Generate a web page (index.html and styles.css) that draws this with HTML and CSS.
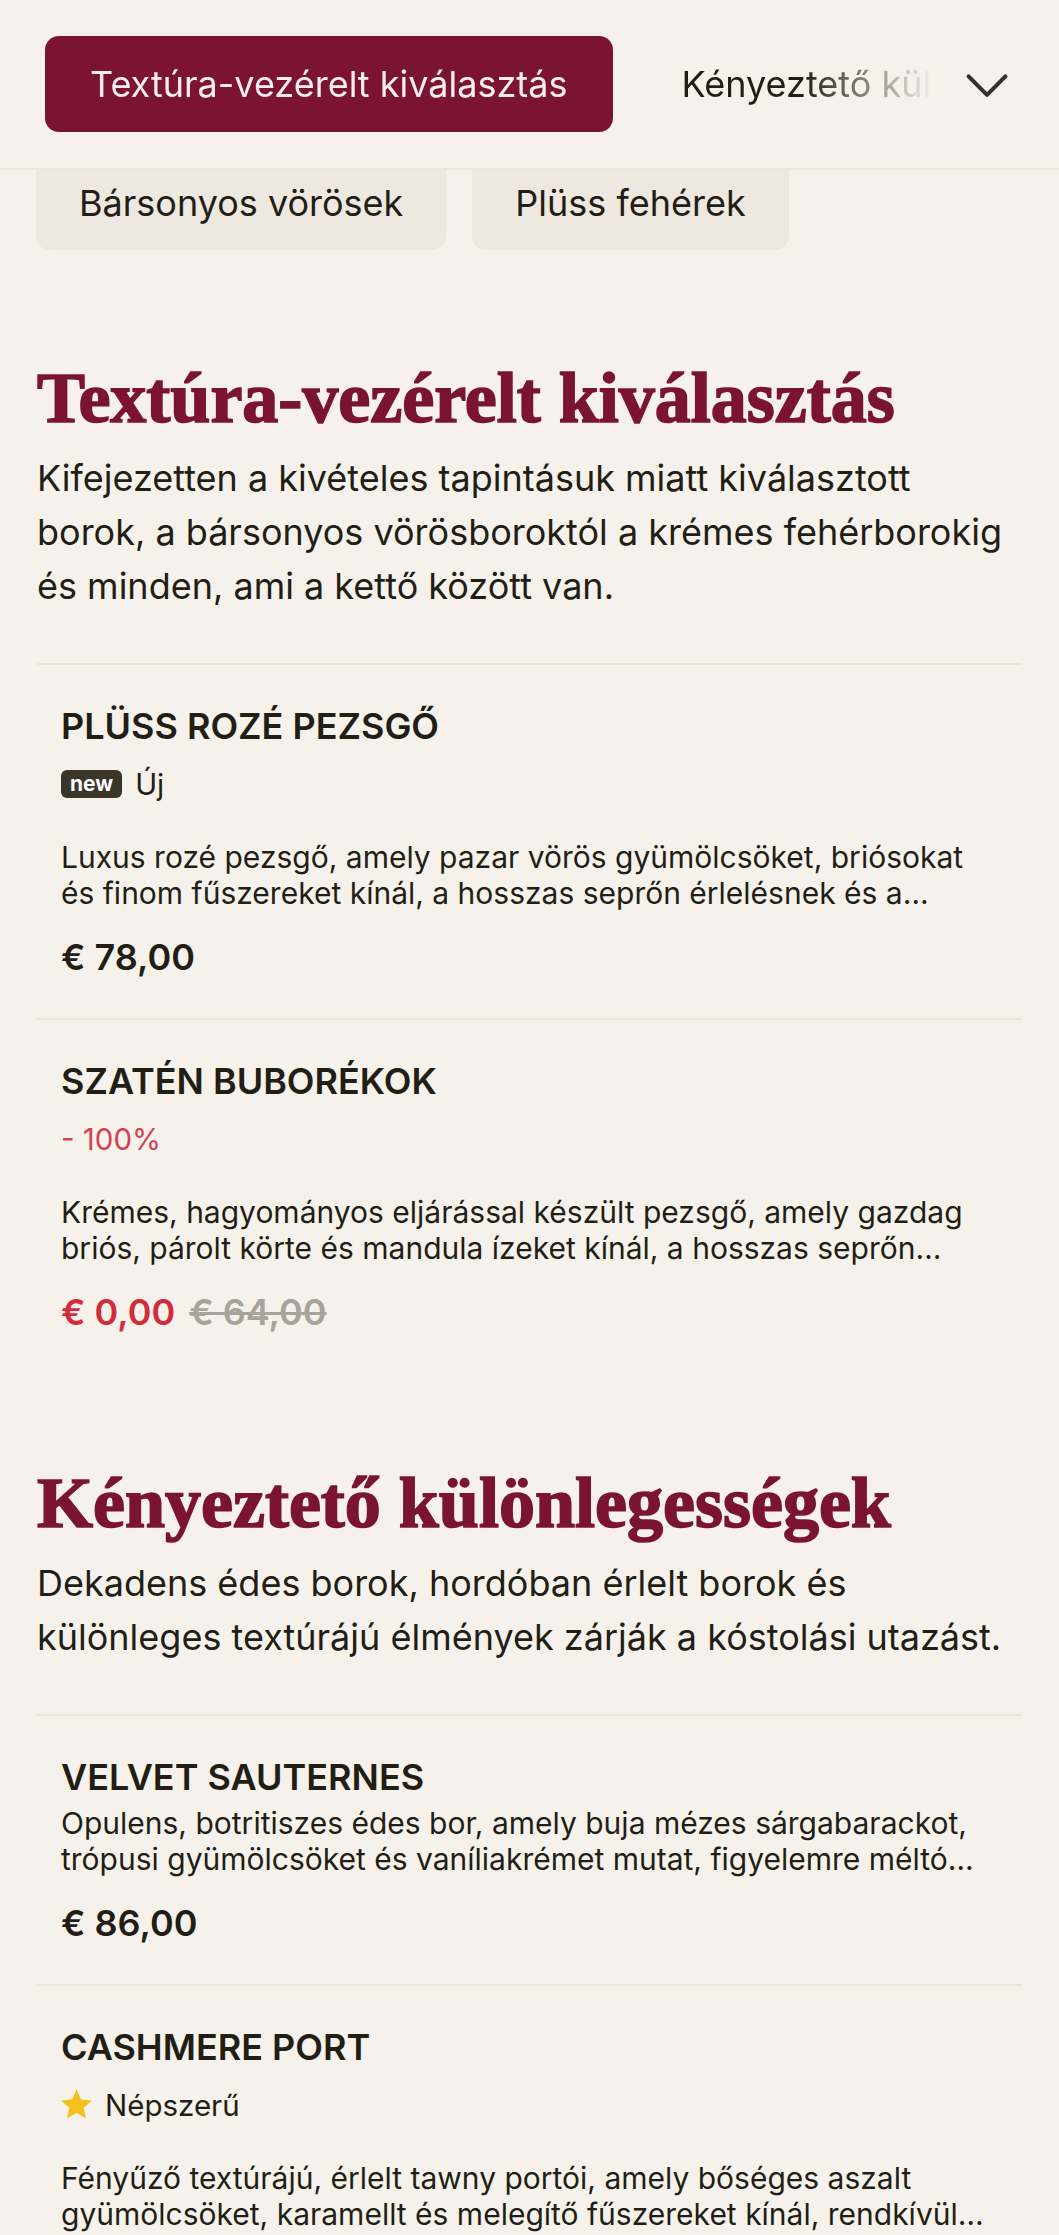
FILE: index.html
```html
<!DOCTYPE html>
<html lang="hu">
<head>
<meta charset="utf-8">
<title>Borlap</title>
<link rel="stylesheet" href="styles.css">
</head>
<body>
<header class="topbar">
  <nav class="tabs">
    <a class="tab tab-active">Textúra-vezérelt kiválasztás</a>
    <a class="tab">Kényeztető különlegességek</a>
  </nav>
  <button class="tabs-toggle" aria-label="Kategóriák">
    <svg width="52" height="52" viewBox="0 0 24 24" fill="none" stroke="#35302a" stroke-width="1.9" stroke-linecap="round" stroke-linejoin="round"><polyline points="3.5 8.5 12 17 20.5 8.5"/></svg>
  </button>
</header>
<div class="chips-viewport">
  <div class="chips">
    <span class="chip">Bársonyos vörösek</span>
    <span class="chip">Plüss fehérek</span>
  </div>
</div>
<main>
  <section class="menu-section">
    <h2 class="section-title">Textúra-vezérelt kiválasztás</h2>
    <p class="section-desc">Kifejezetten a kivételes tapintásuk miatt kiválasztott borok, a bársonyos vörösboroktól a krémes fehérborokig és minden, ami a kettő között van.</p>
    <ul class="products">
      <li class="product">
        <h3 class="product-name">PLÜSS ROZÉ PEZSGŐ</h3>
        <div class="product-tags"><span class="badge-new">new</span><span>Új</span></div>
        <p class="product-desc">Luxus rozé pezsgő, amely pazar vörös gyümölcsöket, briósokat és finom fűszereket kínál, a hosszas seprőn érlelésnek és a…</p>
        <div class="product-price"><span>€ 78,00</span></div>
      </li>
      <li class="product">
        <h3 class="product-name">SZATÉN BUBORÉKOK</h3>
        <div class="product-tags"><span class="discount">- 100%</span></div>
        <p class="product-desc">Krémes, hagyományos eljárással készült pezsgő, amely gazdag briós, párolt körte és mandula ízeket kínál, a hosszas seprőn…</p>
        <div class="product-price"><span class="price-sale">€ 0,00</span><span class="price-old">€ 64,00</span></div>
      </li>
    </ul>
  </section>
  <section class="menu-section">
    <h2 class="section-title">Kényeztető különlegességek</h2>
    <p class="section-desc">Dekadens édes borok, hordóban érlelt borok és különleges textúrájú élmények zárják a kóstolási utazást.</p>
    <ul class="products">
      <li class="product">
        <h3 class="product-name">VELVET SAUTERNES</h3>
        <p class="product-desc">Opulens, botritiszes édes bor, amely buja mézes sárgabarackot, trópusi gyümölcsöket és vaníliakrémet mutat, figyelemre méltó…</p>
        <div class="product-price"><span>€ 86,00</span></div>
      </li>
      <li class="product">
        <h3 class="product-name">CASHMERE PORT</h3>
        <div class="product-tags">
          <svg class="star" width="31" height="31" viewBox="2 2 20 20"><path fill="#f5bf1c" d="M12 2.2l2.9 6.6 7.1.6-5.4 4.7 1.6 7-6.2-3.7-6.2 3.7 1.6-7L2 9.4l7.1-.6z"/></svg>
          <span>Népszerű</span>
        </div>
        <p class="product-desc">Fényűző textúrájú, érlelt tawny portói, amely bőséges aszalt gyümölcsöket, karamellt és melegítő fűszereket kínál, rendkívül…</p>
        <div class="product-price"><span>€ 92,00</span></div>
      </li>
    </ul>
  </section>
</main>
</body>
</html>
```

FILE: styles.css
```css
* {
  box-sizing: border-box;
  margin: 0;
  padding: 0;
}

html,
body {
  background: #f6f2eb;
}

body {
  font-family: Inter, "Noto Sans", sans-serif;
  color: #221e15;
  overflow: hidden;
}

.topbar {
  display: flex;
  align-items: center;
  padding: 36px 27px 36px 45px;
  border-bottom: 2px solid #ece6de;
  background: #f6f2eb;
}

.tabs {
  flex: 1;
  min-width: 0;
  display: flex;
  gap: 24px;
  overflow: hidden;
  white-space: nowrap;
  -webkit-mask-image: linear-gradient(to right, #000 calc(100% - 140px), transparent calc(100% - 8px));
  mask-image: linear-gradient(to right, #000 calc(100% - 140px), transparent calc(100% - 8px));
}

.tab {
  flex: none;
  height: 96px;
  padding: 0 45px;
  display: flex;
  align-items: center;
  font-size: 36px;
  border-radius: 14px;
  color: #221e15;
}

.tab-active {
  background: #7b1431;
  color: #fbeef1;
}

.tabs-toggle {
  flex: none;
  width: 90px;
  height: 96px;
  display: flex;
  align-items: center;
  justify-content: center;
  background: none;
  border: 0;
}

.chips-viewport {
  height: 80px;
  overflow: hidden;
  display: flex;
  align-items: flex-end;
  padding: 0 36px;
  margin-bottom: 17px;
}

.chips {
  display: flex;
  gap: 26px;
}

.chip {
  height: 94px;
  padding: 0 43px;
  display: flex;
  align-items: center;
  background: #eee8e1;
  border-radius: 14px;
  font-size: 36px;
  color: #221e15;
}

.menu-section {
  padding: 92px 37px 0;
}

.section-title {
  font-family: "Liberation Serif", "Times New Roman", serif;
  font-weight: 700;
  font-size: 72px;
  line-height: 79px;
  color: #7a1431;
  letter-spacing: 0;
  -webkit-text-stroke: 1.7px #7a1431;
}

.section-desc {
  max-width: 978px;
  font-size: 36px;
  line-height: 54px;
  margin-top: 13px;
}

.products {
  list-style: none;
  margin-top: 50px;
}

.product {
  border-top: 2px solid #ebe5dc;
  padding: 39px 24px 38.5px;
}

.product-name {
  font-size: 36px;
  font-weight: 600;
  line-height: 44px;
  margin-bottom: 6px;
  color: #221e15;
}

.product-tags {
  display: flex;
  align-items: center;
  gap: 13px;
  font-size: 29.5px;
  line-height: 40px;
  margin: 16px 0 35px;
}

.badge-new {
  height: 28px;
  padding: 0 9px;
  background: #3b3529;
  color: #fff;
  font-size: 21px;
  font-weight: 700;
  line-height: 28px;
  border-radius: 6px;
}

.star {
  display: block;
}

.discount {
  color: #d1434f;
}

.product-desc {
  font-size: 30px;
  line-height: 36px;
  display: -webkit-box;
  -webkit-line-clamp: 2;
  -webkit-box-orient: vertical;
  overflow: hidden;
}

.product-price {
  display: flex;
  gap: 14px;
  margin-top: 24px;
  font-size: 36px;
  font-weight: 600;
  line-height: 44px;
}

.price-sale {
  color: #d42b3b;
}

.price-old {
  color: #a8a39b;
  text-decoration: line-through;
}
```
